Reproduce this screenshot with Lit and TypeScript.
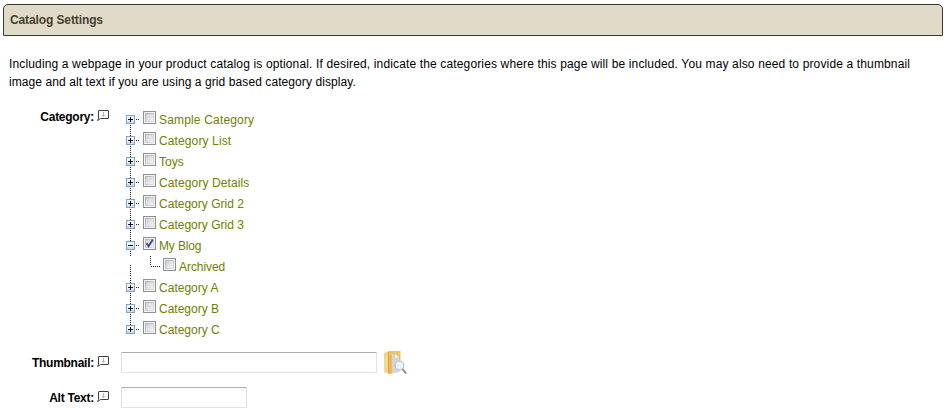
import { LitElement, html, css, svg, nothing } from "lit";
import { customElement, property } from "lit/decorators.js";
import { classMap } from "lit/directives/class-map.js";
import { styleMap } from "lit/directives/style-map.js";

interface Category {
  name: string;
  tracking: number;
  checked?: boolean;
  children?: Category[];
}

const CATEGORIES: Category[] = [
  { name: "Sample Category", tracking: 0.17 },
  { name: "Category List", tracking: 0.12 },
  { name: "Toys", tracking: 0 },
  { name: "Category Details", tracking: 0.1 },
  { name: "Category Grid 2", tracking: 0.02 },
  { name: "Category Grid 3", tracking: 0.02 },
  { name: "My Blog", tracking: -0.15, checked: true, children: [{ name: "Archived", tracking: -0.06 }] },
  { name: "Category A", tracking: 0.02 },
  { name: "Category B", tracking: 0 },
  { name: "Category C", tracking: 0 },
];

@customElement("check-box")
class CheckBox extends LitElement {
  @property({ type: Boolean }) checked = false;

  static styles = css`
    :host { display: block; width: 13px; height: 13px; flex: none; }
    svg { display: block; }
  `;

  render() {
    return html`<svg width="13" height="13" viewBox="0 0 13 13">
      <defs>
        <linearGradient id="face" x1="0" y1="0" x2="1" y2="1">
          <stop offset="0" stop-color="#cbcfd5" />
          <stop offset="1" stop-color="#f6f6f6" />
        </linearGradient>
        <linearGradient id="edge" x1="0" y1="0" x2="1" y2="1">
          <stop offset="0" stop-color="#aeb3b9" />
          <stop offset="1" stop-color="#dfe1e4" />
        </linearGradient>
      </defs>
      <rect x=".5" y=".5" width="12" height="12" fill="#f4f4f4" stroke="#8e8f8f" />
      <rect x="2.5" y="2.5" width="8" height="8" fill="url(#face)" stroke="url(#edge)" />
      ${this.checked
        ? svg`<path d="M3.4 6.2 L5.6 9.2 L9.8 2.6" fill="none" stroke="#3a4f96" stroke-width="1.9" />`
        : nothing}
    </svg>`;
  }
}

@customElement("tree-row")
class TreeRow extends LitElement {
  @property({ attribute: false }) category!: Category;
  @property({ type: Boolean }) child = false;
  @property({ type: Boolean }) first = false;
  @property({ type: Boolean }) last = false;

  static styles = css`
    :host { display: flex; height: 21px; font-size: 12px; }
    svg { display: block; flex: none; }
    check-box { margin-top: 2px; }
    .name { margin-left: 3px; line-height: 23px; color: #737d00; white-space: nowrap; }
  `;

  private branch() {
    return html`<svg width="22" height="21" viewBox="0 0 22 21" shape-rendering="crispEdges">
      ${this.first ? nothing : svg`<path d="M9.5 1V6" stroke="#222" stroke-dasharray="1 1" />`}
      ${this.last ? nothing : svg`<path d="M9.5 16V21" stroke="#222" stroke-dasharray="1 1" />`}
      <path d="M15 10.5H18" stroke="#222" stroke-dasharray="1 1" />
      <rect x="5.5" y="6.5" width="8" height="8" fill="#eef4fa" stroke="#7ba4cb" />
      <rect x="6" y="12" width="7" height="2" fill="#cfdbe6" />
      <path d="M7 10.5H12" stroke="#111" />
      ${this.category.children ? nothing : svg`<path d="M9.5 8V13" stroke="#111" />`}
    </svg>`;
  }

  private leaf() {
    return html`<svg width="42" height="21" viewBox="0 0 42 21" shape-rendering="crispEdges">
      <path d="M9.5 9V21" stroke="#222" stroke-dasharray="1 1" />
      <path d="M29.5 0V10" stroke="#222" stroke-dasharray="1 1" />
      <path d="M30 10.5H39" stroke="#222" stroke-dasharray="1 1" />
    </svg>`;
  }

  render() {
    return html`${this.child ? this.leaf() : this.branch()}
      <check-box ?checked=${!!this.category.checked}></check-box>
      <span class="name" style=${styleMap({ letterSpacing: `${this.category.tracking}px` })}>${this.category.name}</span>`;
  }
}

@customElement("field-label")
class FieldLabel extends LitElement {
  @property() text = "";

  static styles = css`
    :host { display: flex; justify-content: flex-end; width: 109px; flex: none; }
    .text { font-size: 12px; line-height: 16px; font-weight: bold; color: #000; margin-right: 3px; letter-spacing: -0.26px; }
    svg { display: block; margin-top: 1px; }
  `;

  render() {
    return html`<span class="text">${this.text}:</span>
      <svg width="12" height="11" viewBox="0 0 12 11">
        <path d="M1.5 8.5V1Q1.5 .5 2 .5H11Q11.5 .5 11.5 1V8Q11.5 8.5 11 8.5H3.5L.6 10.6L1.5 8.5" fill="#fff" stroke="#3d3d3d" />
        <path d="M6.5 2V6.5M4.8 5L6.5 6.5L8.2 5" fill="none" stroke="#b4b4b4" />
      </svg>`;
  }
}

@customElement("app-root")
class AppRoot extends LitElement {
  static styles = css`
    :host {
      display: block;
      box-sizing: border-box;
      height: 416px;
      padding: 4px 1px 0 3px;
      background: #fff;
      font-family: "Liberation Sans", Arial, sans-serif;
      overflow: hidden;
    }
    .title {
      box-sizing: border-box;
      height: 32px;
      padding-left: 6px;
      border: 1px solid #3d392c;
      border-radius: 5px 5px 0 0;
      background: #e0dac8;
      color: #463f30;
      font-size: 12px;
      font-weight: bold;
      line-height: 30px;
      letter-spacing: -0.11px;
    }
    .intro { margin: 19px 0 0 6px; font-size: 12px; line-height: 18px; color: #000; white-space: nowrap; }
    .line { display: block; letter-spacing: 0.143px; }
    .closing { letter-spacing: 0.085px; }
    .row { display: flex; margin-left: -3px; }
    .category { margin-top: 18px; height: 231px; }
    .tree { margin-left: 12px; }
    .thumbnail { margin-top: 10px; height: 26px; }
    .alt { margin-top: 11px; }
    .thumbnail field-label { margin-top: 5px; }
    .alt field-label { margin-top: 3px; }
    .input {
      box-sizing: border-box;
      height: 21px;
      width: 126px;
      margin-left: 12px;
      padding: 0 4px;
      border: 1px solid #e2e3ea;
      border-top-color: #abadb3;
      border-radius: 1px;
      background: #fff;
      outline: none;
    }
    .wide { width: 256px; margin-top: 2px; }
    .browse { display: block; margin-left: 7px; }
  `;

  render() {
    const rows = CATEGORIES.flatMap((category, i) => [
      html`<tree-row .category=${category} ?first=${i === 0} ?last=${i === CATEGORIES.length - 1}></tree-row>`,
      ...(category.children ?? []).map((c) => html`<tree-row child .category=${c}></tree-row>`),
    ]);
    return html`
      <div class="title">Catalog Settings</div>
      <div class="intro">
        <span class="line">Including a webpage in your product catalog is optional. If desired, indicate the categories where this page will be included. You may also need to provide a thumbnail</span>
        <span class="line closing">image and alt text if you are using a grid based category display.</span>
      </div>
      <div class="row category">
        <field-label text="Category"></field-label>
        <div class="tree">${rows}</div>
      </div>
      <div class="row thumbnail">
        <field-label text="Thumbnail"></field-label>
        <input class=${classMap({ input: true, wide: true })} />
        <svg class="browse" width="24" height="26" viewBox="0 0 24 26">
          <path d="M0 3L5 1H16.5V21L6 24L0 22Z" fill="#efc367" />
          <path d="M0 3L4 1.5V23.5L0 22Z" fill="#f5d78c" />
          <path d="M4 2L5.2 1.6V23.5L4 23Z" fill="#dca548" />
          <path d="M7.5 4.5L11 4L15 7V22L7.5 23.5Z" fill="#d3d4d8" />
          <path d="M11 4V8L15 7Z" fill="#eff0f2" />
          <path d="M5.2 7L7.5 4.5V23.5L5.2 24Z" fill="#e9b458" />
          <path d="M18.6 19L21.6 23" stroke="#9c8580" stroke-width="2" stroke-linecap="round" />
          <circle cx="15.5" cy="15.5" r="4.3" fill="#eaf5fd" stroke="#b9c9d6" stroke-width="1.3" />
        </svg>
      </div>
      <div class="row alt">
        <field-label text="Alt Text"></field-label>
        <input class="input" />
      </div>
    `;
  }
}
